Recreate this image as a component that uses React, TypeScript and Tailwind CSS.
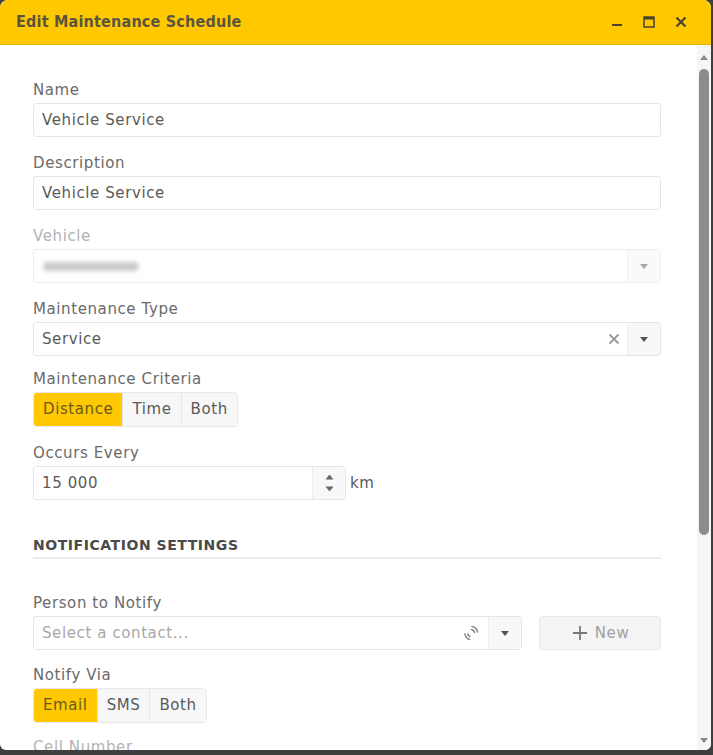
import React from "react";

const Caret = ({ color = "#6b6b6b" }: { color?: string }) => (
  <svg width="10" height="7" viewBox="0 0 10 7">
    <path d="M1 1 L9 1 L5 6 Z" fill={color} />
  </svg>
);

const Label = ({ children, muted }: { children: React.ReactNode; muted?: boolean }) => (
  <div className={`text-[15px] leading-[18px] mb-[4px] tracking-[0.6px] ${muted ? "text-[#b3b3b3]" : "text-[#6a6a6a]"}`}>{children}</div>
);

const TextInput = ({ value }: { value: string }) => (
  <div className="h-[34px] rounded-[3px] border border-[#e6e6e6] bg-white flex items-center px-[8px] text-[15px] tracking-[0.6px] text-[#5a5a5a]">
    {value}
  </div>
);

const Seg = ({ items, active }: { items: string[]; active: number }) => (
  <div className="flex h-[35px] w-fit rounded-[4px] border border-[#e8e8e8] overflow-hidden text-[15px] tracking-[0.6px]">
    {items.map((t, i) => (
      <div
        key={t}
        className={`flex items-center px-[9px] ${i > 0 ? "border-l border-[#e6e6e6]" : ""} ${
          i === active ? "bg-[#ffc800] text-[#6b5a1e]" : "bg-[#f7f7f7] text-[#5a5a5a]"
        }`}
      >
        {t}
      </div>
    ))}
  </div>
);

const Loader = () => (
  <svg width="18" height="18" viewBox="0 0 18 18" fill="none" stroke="#8a8a8a" strokeWidth="1.6" strokeLinecap="round">
    <path d="M10 2.5 A6.5 6.5 0 0 1 15.5 8" />
    <path d="M9.5 5.5 A3.5 3.5 0 0 1 12.5 8.5" />
    <path d="M3 10 A6.5 6.5 0 0 0 7.5 15.5" />
    <path d="M5.8 10 A3.5 3.5 0 0 0 8 12.5" />
  </svg>
);

export default function App() {
  return (
    <div className="w-[713px] h-[755px] bg-[#3f3f3f] overflow-hidden" style={{ fontFamily: '"DejaVu Sans", "Open Sans", sans-serif' }}>
      <div className="w-[711px] h-[750px] bg-white rounded-b-[6px] rounded-t-[8px] overflow-hidden flex flex-col">
        {/* Header */}
        <div className="h-[45px] shrink-0 bg-[#ffc800] border-b border-[#e3b400] flex items-center pl-[16px] pr-[24px]">
          <div className="text-[16px] font-bold text-[#5b5540] tracking-[0.2px]" style={{ fontFamily: '"DejaVu Sans Condensed", "DejaVu Sans", sans-serif', fontStretch: "condensed" }}>
            Edit Maintenance Schedule
          </div>
          <div className="ml-auto flex items-center gap-[20px] text-[#4a4530]">
            <svg width="12" height="12" viewBox="0 0 12 12">
              <rect x="1" y="8" width="10" height="2" fill="#4a4530" />
            </svg>
            <svg width="12" height="12" viewBox="0 0 12 12">
              <rect x="1" y="1" width="10" height="10" fill="none" stroke="#4a4530" strokeWidth="1.5" />
              <rect x="1" y="1" width="10" height="2.5" fill="#4a4530" />
            </svg>
            <svg width="12" height="12" viewBox="0 0 12 12">
              <path d="M1.5 1.5 L10.5 10.5 M10.5 1.5 L1.5 10.5" stroke="#4a4530" strokeWidth="2.2" />
            </svg>
          </div>
        </div>

        {/* Body */}
        <div className="flex-1 flex min-h-0">
          <div className="flex-1 overflow-hidden pl-[33px] pr-[36px] pt-[36px]">
            <Label>Name</Label>
            <TextInput value="Vehicle Service" />

            <div className="mt-[17px]">
              <Label>Description</Label>
              <TextInput value="Vehicle Service" />
            </div>

            <div className="mt-[17px]">
              <Label muted>Vehicle</Label>
              <div className="h-[34px] rounded-[3px] border border-[#eeeeee] bg-white flex items-center">
                <div className="flex-1 px-[9px]">
                  <div className="w-[96px] h-[9px] rounded-full bg-[#c9c9c9] blur-[2px]" />
                </div>
                <div className="w-[33px] h-full bg-[#fafafa] border-l border-[#f0f0f0] flex items-center justify-center">
                  <Caret color="#a8a8a8" />
                </div>
              </div>
            </div>

            <div className="mt-[17px]">
              <Label>Maintenance Type</Label>
              <div className="h-[34px] rounded-[3px] border border-[#e6e6e6] bg-white flex items-center">
                <div className="flex-1 px-[8px] text-[15px] tracking-[0.6px] text-[#5a5a5a]">Service</div>
                <svg width="12" height="12" viewBox="0 0 12 12" className="mr-[7px]">
                  <path d="M1.5 1.5 L10.5 10.5 M10.5 1.5 L1.5 10.5" stroke="#9a9a9a" strokeWidth="1.8" />
                </svg>
                <div className="w-[33px] h-full bg-[#f8f8f8] border-l border-[#ececec] flex items-center justify-center">
                  <Caret color="#555" />
                </div>
              </div>
            </div>

            <div className="mt-[14px]">
              <Label>Maintenance Criteria</Label>
              <Seg items={["Distance", "Time", "Both"]} active={0} />
            </div>

            <div className="mt-[17px]">
              <Label>Occurs Every</Label>
              <div className="flex items-center">
                <div className="w-[313px] h-[34px] rounded-[3px] border border-[#e6e6e6] bg-white flex items-center">
                  <div className="flex-1 px-[8px] text-[15px] tracking-[0.6px] text-[#5a5a5a]">15 000</div>
                  <div className="w-[33px] h-full bg-[#f8f8f8] border-l border-[#ececec] flex flex-col items-center justify-center gap-[6px]">
                    <svg width="9" height="6" viewBox="0 0 9 6"><path d="M0.5 5.5 L8.5 5.5 L4.5 0.5 Z" fill="#666" /></svg>
                    <svg width="9" height="6" viewBox="0 0 9 6"><path d="M0.5 0.5 L8.5 0.5 L4.5 5.5 Z" fill="#666" /></svg>
                  </div>
                </div>
                <div className="ml-[4px] text-[15px] tracking-[0.6px] text-[#5a5a5a]">km</div>
              </div>
            </div>

            <div className="mt-[35px] leading-[20px] pb-[2px] border-b-2 border-[#ececec] text-[14px] font-bold tracking-[0.55px] text-[#4a4a4a]">
              NOTIFICATION SETTINGS
            </div>

            <div className="mt-[35px]">
              <Label>Person to Notify</Label>
              <div className="flex items-center">
                <div className="w-[489px] h-[34px] rounded-[3px] border border-[#e6e6e6] bg-white flex items-center">
                  <div className="flex-1 px-[8px] text-[15px] tracking-[0.6px] text-[#a8a8a8]">Select a contact...</div>
                  <div className="mr-[8px] flex items-center"><Loader /></div>
                  <div className="w-[33px] h-full bg-[#f8f8f8] border-l border-[#ececec] flex items-center justify-center">
                    <Caret color="#555" />
                  </div>
                </div>
                <div className="ml-[17px] flex-1 h-[34px] rounded-[4px] border border-[#e8e8e8] bg-[#f4f4f4] flex items-center justify-center gap-[6px] text-[15px] tracking-[0.6px] text-[#a0a0a0]">
                  <svg width="18" height="18" viewBox="0 0 18 18">
                    <path d="M9 2 V16 M2 9 H16" stroke="#7a7a7a" strokeWidth="1.8" />
                  </svg>
                  New
                </div>
              </div>
            </div>

            <div className="mt-[16px]">
              <Label>Notify Via</Label>
              <Seg items={["Email", "SMS", "Both"]} active={0} />
            </div>

            <div className="mt-[15px]">
              <Label muted>Cell Number</Label>
              <TextInput value="" />
            </div>
          </div>

          {/* Scrollbar */}
          <div className="w-[14px] shrink-0 bg-[#f6f6f6] flex flex-col items-center pt-[9px] pb-[6px]">
            <svg width="10" height="7" viewBox="0 0 10 7"><path d="M1 6 L9 6 L5 1 Z" fill="#8a8a8a" /></svg>
            <div className="mt-[8px] w-[10px] h-[466px] rounded-full bg-[#8c8c8c]" />
            <div className="flex-1" />
            <Caret color="#8a8a8a" />
          </div>
        </div>
      </div>
    </div>
  );
}
